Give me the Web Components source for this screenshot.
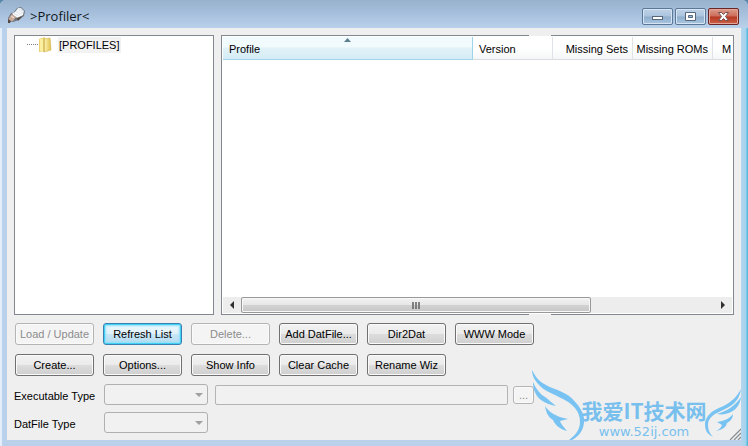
<!DOCTYPE html>
<html lang="en">
<head>
<meta charset="utf-8">
<title>Profiler</title>
<style>
html,body{margin:0;height:100%}
body{font:11px/16px "Liberation Sans",Arial,sans-serif;color:#000;overflow:hidden;background:#5b87a8}
</style>
</head>
<body>
<profiler-app></profiler-app>
<script>
const define=(name,html)=>customElements.define(name,class extends HTMLElement{
  constructor(){super();this.attachShadow({mode:'open'}).innerHTML='<style>:host,*{box-sizing:border-box}</style>'+html;}
});

customElements.define('push-button',class extends HTMLElement{
  connectedCallback(){
    if(this.shadowRoot)return;
    this.attachShadow({mode:'open'}).innerHTML=`<style>
    :host{display:block}
    button{box-sizing:border-box;width:100%;height:100%;margin:0;padding:0;font:inherit;color:#000;white-space:nowrap;
      border:1px solid #707070;border-radius:3px;box-shadow:inset 0 0 0 1px #fafafa;
      background:linear-gradient(#f2f2f2,#ebebeb 48%,#dcdcdc 52%,#cfcfcf)}
    button:disabled{color:#8c8c8c;border-color:#b4b4b4;background:#f4f4f4}
    :host([default]) button{border-color:#3c7fb1;box-shadow:inset 0 0 0 1px #3fd0f5,inset 0 0 2px 2px #8fe0fa;
      background:linear-gradient(#edf7fc,#e0f1fa 48%,#c8e6f6 52%,#b4daf0)}
    </style><button type="button"${this.hasAttribute('disabled')?' disabled':''}><slot></slot></button>`;
  }
});

customElements.define('combo-field',class extends HTMLElement{
  connectedCallback(){
    if(this.shadowRoot)return;
    this.attachShadow({mode:'open'}).innerHTML=`<style>
    :host{display:flex;align-items:center}
    label{width:90px;flex:none;white-space:nowrap;padding-top:2px;box-sizing:border-box}
    .box{position:relative;width:104px;height:21px}
    select{appearance:none;display:block;width:100%;height:100%;margin:0;font:inherit;border:1px solid #b0b0b0;border-radius:3px;background:#f1f1f1;opacity:1}
    svg{position:absolute;right:5px;top:9px;pointer-events:none}
    </style><label for="s">${this.getAttribute('label')}</label>
    <div class="box"><select id="s" disabled></select><svg width="8" height="4"><path d="M0 0h8L4 4z" fill="#a0a0a0"/></svg></div>`;
  }
});

define('title-bar',`<style>
:host{display:flex;align-items:center;height:28px;flex:none;color:#101820}
.icon{margin:2px 5px 0 0;flex:none}
h1{flex:1;margin:4px 0 0;font:13px/20px "Open Sans","Noto Sans",sans-serif}
.caps{display:flex;gap:2px;align-self:flex-start;margin-top:8px}
button{width:31px;height:17px;margin:0;padding:0;border:1px solid #5b7896;border-radius:2px;box-shadow:inset 0 0 0 1px #d6e4f3;
 background:linear-gradient(#bfd3e8,#abc4dd 48%,#8fadcb 52%,#a9c6e2);display:grid;place-items:center}
button.close{border-color:#6b2525;box-shadow:inset 0 0 0 1px #e2a79b;background:linear-gradient(#dc9a8b,#cd6c58 48%,#b63724 52%,#cc6144)}
svg{display:block}
</style>
<svg class="icon" width="17" height="16" viewBox="0 0 17 16"><path d="M0 11 3 6l3-1 3-4 4-1 4 4-1 5-5 4-6 2-4-1z" fill="#70777f"/><path d="m4 6 3-1 3-4 3 0 3 3-1 4-5 3-4-2z" fill="#e6ebef"/><path d="m5 7 4 3 6-3M7 5l4 3M9 3l4 3" stroke="#fff" fill="none"/><path d="m1 11 3-4 4 3-3 4-4 0z" fill="#c9ab9a"/><path d="m0 12 3 2-1 2H0zm9-1 5-2-4 5z" fill="#54483f"/><path d="M3 9l3 2" stroke="#f7e8df"/></svg>
<h1>&gt;Profiler&lt;</h1>
<div class="caps">
<button type="button" aria-label="Minimize"><svg width="13" height="11"><rect x="1.500" y="5.500" width="10" height="3" fill="#fff" stroke="#58687a"/></svg></button>
<button type="button" aria-label="Maximize"><svg width="13" height="11"><path fill-rule="evenodd" d="M1.500 1.500h10v8h-10zM4.500 4.500v2h4v-2z" fill="#fff" stroke="#58687a"/></svg></button>
<button type="button" class="close" aria-label="Close"><svg width="13" height="11"><path d="M1.500 1.500h3l2 2 2-2h3L8.500 5.500l3 4h-3l-2-2-2 2h-3l3-4z" fill="#fff" stroke="#70504f"/></svg></button>
</div>`);

define('profile-tree',`<style>
:host{display:block;background:#fff;border:1px solid #828790}
ul{list-style:none;margin:0;padding:0 0 0 12px}
li{display:flex;align-items:center;height:17px}
.line{width:11px;border-top:1px dotted #808080}
svg{flex:none;margin-right:6px}
span{background:#f2f2f2;padding:0 1px}
</style>
<ul role="tree"><li role="treeitem"><i class="line"></i>
<svg width="14" height="16" viewBox="0 0 14 16"><defs><linearGradient id="g" x2="1"><stop stop-color="#fff6b4"/><stop offset="1" stop-color="#dfc04e"/></linearGradient></defs><path d="M1 2 7 0v14l-6 1z" fill="#e9d070"/><path d="M2 2h4v12H2z" fill="#fbefa0"/><path d="m6 2 6-1 1 12-7 2z" fill="url(#g)" stroke="#cfb14b" stroke-width=".6"/><path d="M6 2v13" stroke="#c9ac4c"/></svg>
<span>[PROFILES]</span></li></ul>`);

define('scroll-bar',`<style>
:host{display:flex;height:16px;background:#ededed}
button{flex:none;width:18px;padding:0;margin:0;border:0;background:none;display:grid;place-items:center}
.track{flex:1;display:flex}
.thumb{width:74%;border:1px solid #989898;border-radius:2px;box-shadow:inset 0 0 0 1px #f8f8f8;background:linear-gradient(#f3f3f3,#e6e6e6 48%,#d2d2d2 52%,#c6c6c6);display:grid;place-items:center}
</style>
<button type="button" aria-label="Scroll left"><svg width="4" height="8"><path d="M4 0v8L0 4z" fill="#303030"/></svg></button>
<div class="track"><div class="thumb"><svg width="9" height="7"><path d="M1 0v7M4 0v7M7 0v7" stroke="#606060" stroke-width="1.500"/></svg></div></div>
<button type="button" aria-label="Scroll right"><svg width="4" height="8"><path d="M0 0v8l4-4z" fill="#303030"/></svg></button>`);

define('profile-list',`<style>
:host{display:flex;flex-direction:column;position:relative;background:#fff;border:1px solid #828790;padding:1px;min-width:0}
.view{flex:1;overflow:hidden}
table{border-collapse:separate;border-spacing:0;table-layout:fixed;width:570px}
th{font-weight:normal;height:23px;padding:1px 4px 0 6px;text-align:left;white-space:nowrap;border-right:1px solid #dfe2e6;border-bottom:1px solid #d9dce0;background:linear-gradient(#fff 50%,#f5f6f7)}
th.n{text-align:right;padding-left:2px}
th.sorted{position:relative;border-color:#9ed4e8;background:linear-gradient(#f1fafd 45%,#e1f2f8 50%,#d5ecf6)}
th svg{position:absolute;left:50%;top:1px;margin-left:-4px}
.gap{position:absolute;left:60%;width:22px;height:1px;background:#efefef}
.top{top:-1px}.bottom{bottom:-1px}
</style>
<div class="view"><table><colgroup><col style="width:250px"><col style="width:80px"><col style="width:80px"><col style="width:80px"><col style="width:80px"></colgroup>
<thead><tr><th class="sorted" aria-sort="ascending">Profile<svg width="7" height="4"><path d="M0 4 3.500 0 7 4z" fill="#5d7f90"/></svg></th><th>Version</th><th class="n">Missing Sets</th><th class="n">Missing ROMs</th><th style="padding-left:9px">M</th></tr></thead><tbody></tbody></table></div>
<scroll-bar></scroll-bar><i class="gap top"></i><i class="gap bottom"></i>`);

define('site-mark',`<style>
:host{display:block;position:absolute;right:0;bottom:0;width:210px;height:72px;pointer-events:none;color:#78bfee}
svg{position:absolute;inset:0}
.t{position:absolute;left:48px;right:32px;bottom:0;text-align:center;white-space:nowrap}
b{display:block;font:bold 21px/28px "Noto Sans CJK SC",sans-serif}
span{display:block;font:13px/16px "DejaVu Sans",sans-serif}
</style>
<svg width="210" height="72" viewBox="0 0 210 72" fill="#79c3f3">
<path d="M1 2C5 10 9 14 15 17 20 20 25 21 31 24 38 27 42 31 46 36 51 42 54 49 53 55 52 63 48 68 41 72H38C45 67 49 61 49 54 49 48 47 44 44 40 39 34 32 31 24 27 18 24 13 22 9 18 4 13 1 8 1 2z"/>
<path d="M2 14C5 21 9 26 14 29 18 32 20 34 25 38 19 37 14 35 10 32 5 28 2 22 2 14z"/>
<path d="M14 38C18 44 25 49 37 51L29 53C31 58 34 60 36 63 29 61 24 57 22 52 17 49 15 44 14 38z"/>
<path d="M210 21C206 28 203 31 199 34 194 38 189 39 184 42 178 45 174 51 174 56 174 62 176 66 182 69 178 65 177 61 177 57 177 53 179 49 184 46 189 43 195 41 201 37 206 33 209 28 210 21z"/>
<path d="M210 29C209 36 206 41 200 44 196 46 191 47 186 46 196 43 204 38 210 29z"/>
<path d="M202 46C198 51 193 53 186 54L191 57C190 60 188 61 185 63 190 62 195 60 196 55 200 53 202 50 202 46z"/>
</svg>
<div class="t"><b>我爱IT技术网</b><span>www.52ij.com</span></div>`);

define('profiler-app',`<style>
:host{display:flex;flex-direction:column;min-height:100vh;padding:0 7px 6px;border-radius:6px 6px 0 0;
 background:linear-gradient(90deg,#e3eefa 2px,#b9d1ea 2px,#b9d1ea calc(100% - 7px),#b5d5ee calc(100% - 7px),#a3d3ee calc(100% - 2px),#5ab9dc calc(100% - 1px))}
title-bar{margin:0 -7px;padding:0 9px 0 8px;background:linear-gradient(#98b2ce,#a5bedb 45%,#b9d1ea);border-radius:6px 6px 0 0}
main{flex:1;position:relative;display:flex;flex-direction:column;background:#efefef;padding:7px}
.panes{flex:1;display:flex;gap:7px;min-height:200px}
profile-tree{width:200px;flex:none}
profile-list{flex:1}
.buttons{display:grid;grid-template-columns:repeat(6,79px);gap:9px;margin:8px 0 8px 1px}
.buttons push-button{height:22px}
form{display:flex;flex-direction:column;gap:7px;margin:0}
.row{display:flex;align-items:center;gap:7px}
.path{width:293px;height:20px;margin:0;border:1px solid #b4b4b4;border-radius:2px;background:#f1f1f1}
.row push-button{width:21px;height:18px;margin-left:-2px;line-height:12px}
.grip{position:absolute;right:0;bottom:0}
</style>
<title-bar></title-bar>
<main>
<div class="panes"><profile-tree></profile-tree><profile-list></profile-list></div>
<div class="buttons">
<push-button disabled>Load / Update</push-button><push-button default>Refresh List</push-button><push-button disabled>Delete...</push-button><push-button>Add DatFile...</push-button><push-button>Dir2Dat</push-button><push-button>WWW Mode</push-button>
<push-button>Create...</push-button><push-button>Options...</push-button><push-button>Show Info</push-button><push-button>Clear Cache</push-button><push-button>Rename Wiz</push-button>
</div>
<form><div class="row"><combo-field label="Executable Type"></combo-field><input class="path" type="text" aria-label="Executable path" disabled><push-button disabled>...</push-button></div>
<combo-field label="DatFile Type"></combo-field></form>
<svg class="grip" width="12" height="12"><path d="M1 12 12 1M5 12l7-7M9 12l3-3" stroke="#8a8f94" stroke-width="1.300"/></svg>
<site-mark></site-mark>
</main>`);
</script>
</body>
</html>
